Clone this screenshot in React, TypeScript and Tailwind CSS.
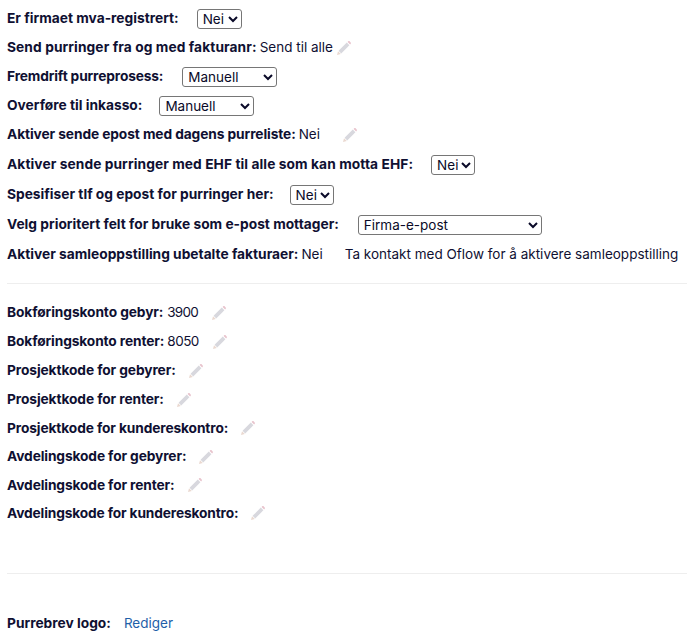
import type { ReactNode } from "react";

function Pencil({ ml = "ml-3" }: { ml?: string }) {
  return (
    <svg className={`${ml} w-[16px] h-[16px] shrink-0`} viewBox="0 0 16 16" fill="none">
      <path d="M1 15l1-3.8 2.8 2.8z" fill="#ead8d0" />
      <path d="M2.6 10.8L10.8 2.6l2.6 2.6-8.2 8.2z" fill="#d8d8de" />
      <path d="M11.6 1.9l.6-.6c.4-.4 1-.4 1.4 0l1.1 1.1c.4.4.4 1 0 1.4l-.6.6z" fill="#e8c4cd" />
    </svg>
  );
}

function Row({
  label,
  children,
  h = "h-[29px]",
  track = "",
}: {
  label: string;
  children?: ReactNode;
  h?: string;
  track?: string;
}) {
  return (
    <div className={`flex items-center ${h}`}>
      <b className={`font-bold text-[13.75px] whitespace-nowrap ${track}`}>{label}</b>
      {children}
    </div>
  );
}

function Select({ value, w, ml }: { value: string; w: string; ml: string }) {
  return (
    <select
      defaultValue={value}
      className={`${w} ${ml} h-[20px] border border-[#767676] rounded-[3px] bg-white pl-[1px] text-[13.5px] text-[#0a0a28]`}
    >
      <option>{value}</option>
    </select>
  );
}

export default function App() {
  return (
    <div className="bg-white w-[687px] h-[639px] overflow-hidden pl-[7px] pt-[4px] text-[13.5px] text-[#0f1032] font-['Inter',sans-serif]">
      <Row label="Er firmaet mva-registrert:">
        <Select value="Nei" w="w-[45px]" ml="ml-[18px]" />
      </Row>
      <Row label="Send purringer fra og med fakturanr:" track="tracking-[0.09px]">
        <span className="ml-[3px]">Send til alle</span>
        <Pencil ml="ml-[3px]" />
      </Row>
      <Row label="Fremdrift purreprosess:" track="tracking-[-0.15px]">
        <Select value="Manuell" w="w-[95px]" ml="ml-[19px]" />
      </Row>
      <Row label="Overføre til inkasso:">
        <Select value="Manuell" w="w-[95px]" ml="ml-[17px]" />
      </Row>
      <Row label="Aktiver sende epost med dagens purreliste:" track="tracking-[-0.1px]">
        <span className="ml-[3px]">Nei</span>
        <Pencil ml="ml-[22px]" />
      </Row>
      <Row label="Aktiver sende purringer med EHF til alle som kan motta EHF:" h="h-[31px]" track="tracking-[0.08px]">
        <Select value="Nei" w="w-[44px]" ml="ml-[18px]" />
      </Row>
      <Row label="Spesifiser tlf og epost for purringer her:">
        <Select value="Nei" w="w-[44px]" ml="ml-[16px]" />
      </Row>
      <Row label="Velg prioritert felt for bruke som e-post mottager:" h="h-[31px]">
        <Select value="Firma-e-post" w="w-[184px]" ml="ml-[19px]" />
      </Row>
      <Row label="Aktiver samleoppstilling ubetalte fakturaer:">
        <span className="ml-[3px]">Nei</span>
        <span className="ml-[22px] whitespace-nowrap">Ta kontakt med Oflow for å aktivere samleoppstilling</span>
      </Row>

      <hr className="border-0 border-t border-[#eeeeee] mt-[14px] mb-[14px]" />

      <Row label="Bokføringskonto gebyr:" track="tracking-[-0.1px]">
        <span className="ml-[4px] tracking-[-0.8px]">3900</span>
        <Pencil ml="ml-[13px]" />
      </Row>
      <Row label="Bokføringskonto renter:" track="tracking-[-0.12px]">
        <span className="ml-[3px] tracking-[-0.5px]">8050</span>
        <Pencil ml="ml-[13px]" />
      </Row>
      <Row label="Prosjektkode for gebyrer:" track="tracking-[-0.1px]">
        <Pencil />
      </Row>
      <Row label="Prosjektkode for renter:" track="tracking-[-0.1px]">
        <Pencil />
      </Row>
      <Row label="Prosjektkode for kundereskontro:" h="h-[28px]" track="tracking-[-0.12px]">
        <Pencil />
      </Row>
      <Row label="Avdelingskode for gebyrer:" track="tracking-[-0.12px]">
        <Pencil />
      </Row>
      <Row label="Avdelingskode for renter:" h="h-[28px]" track="tracking-[-0.12px]">
        <Pencil />
      </Row>
      <Row label="Avdelingskode for kundereskontro:" h="h-[28px]" track="tracking-[-0.15px]">
        <Pencil />
      </Row>

      <hr className="border-0 border-t border-[#eeeeee] mt-[46px] mb-[35px]" />

      <Row label="Purrebrev logo:">
        <a className="ml-[13px] text-[#1f5fa8]">Rediger</a>
      </Row>
    </div>
  );
}
